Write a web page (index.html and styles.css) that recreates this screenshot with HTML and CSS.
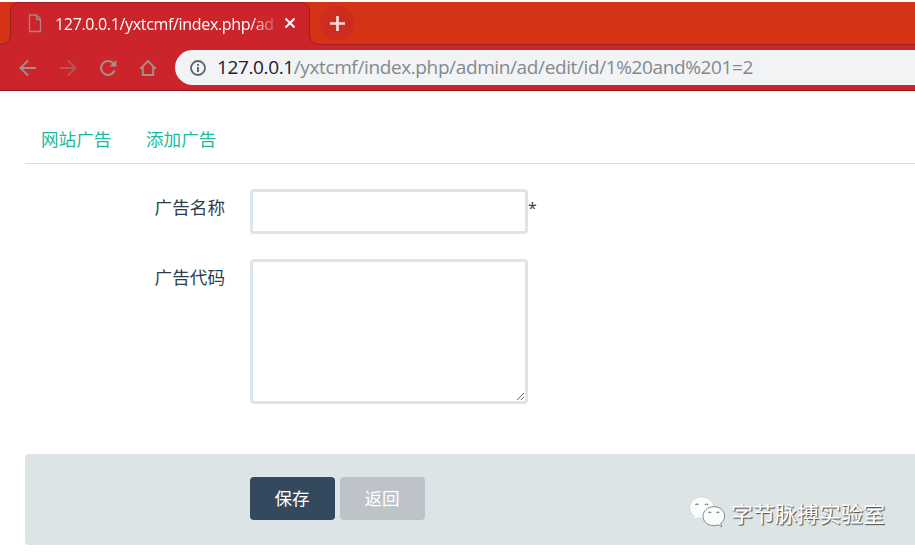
FILE: index.html
```html
<!DOCTYPE html>
<html lang="zh-CN">
<head>
<meta charset="utf-8">
<title>127.0.0.1/yxtcmf/index.php/admin/ad/edit</title>
<link rel="stylesheet" href="styles.css">
</head>
<body>
<header class="browser">
  <div class="tab-strip">
    <svg class="tab-shape" width="330" height="43" viewBox="0 0 330 43">
      <path d="M0 43V42Q10.500 42 10.500 32V9Q10.500 .5 19 .5H301Q309.500 .5 309.500 9V32Q309.500 42 320 42H330V43Z" fill="#cb242a"/>
      <path d="M0 42.500Q10.500 42.500 10.500 32V9Q10.500 .5 19 .5H301Q309.500 .5 309.500 9V32Q309.500 42.500 320 42.500H330" fill="none" stroke="#99211f"/>
    </svg>
    <div class="tab">
      <svg class="page-icon" width="14" height="19" viewBox="0 0 14 19"><path d="M1.500 1H8.500L12.500 5V17.500H1.500ZM8.500 1V5.500H12.500" fill="none" stroke="#a98480" stroke-width="1.300"/></svg>
      <span class="tab-title">127.0.0.1/yxtcmf/index.php/ad</span>
      <svg class="close" width="12" height="12" viewBox="0 0 12 12"><path d="M1.500 1.500L10.500 10.500M10.500 1.500L1.500 10.500" stroke="#fff" stroke-width="2"/></svg>
    </div>
    <div class="new-tab"><svg width="15" height="15" viewBox="0 0 15 15"><path d="M7.500 0V15M0 7.500H15" stroke="#f6dfda" stroke-width="2.600"/></svg></div>
  </div>
  <div class="toolbar">
    <svg class="nav" width="18" height="18" viewBox="0 0 18 18"><path d="M17 9H2M9 1.500L1.500 9L9 16.500" fill="none" stroke="#a3908c" stroke-width="1.800"/></svg>
    <svg class="nav" width="18" height="18" viewBox="0 0 18 18"><path d="M1 9H16M9 1.500L16.500 9L9 16.500" fill="none" stroke="#b5575a" stroke-width="1.800"/></svg>
    <svg class="nav" width="18" height="18" viewBox="0 0 18 18"><path d="M14.500 4.500A7 7 0 1 0 15.600 11.400" fill="none" stroke="#a3908c" stroke-width="2"/><path d="M17.300 1V7.500H10.500Z" fill="#a3908c"/></svg>
    <svg class="nav" width="18" height="18" viewBox="0 0 18 18"><path d="M1.200 9.800L9 2L16.800 9.800M3.800 8V16H14.200V8" fill="none" stroke="#a3908c" stroke-width="1.900"/></svg>
    <div class="address">
      <svg width="16" height="16" viewBox="0 0 16 16"><circle cx="8" cy="8" r="7" fill="none" stroke="#5f6368" stroke-width="1.800"/><path d="M8 7V12M8 4V5.800" stroke="#5f6368" stroke-width="1.900"/></svg>
      <span class="url"><b>127.0.0.1</b>/yxtcmf/index.php/admin/ad/edit/id/1%20and%201=2</span>
    </div>
  </div>
</header>
<main>
  <nav class="tabs"><a>网站广告</a><a>添加广告</a></nav>
  <form>
    <div class="row"><label for="name">广告名称</label><input id="name" type="text"><span class="required">*</span></div>
    <div class="row"><label for="code">广告代码</label><textarea id="code"></textarea></div>
    <div class="actions">
      <button type="button" class="save">保存</button>
      <button type="button" class="back">返回</button>
      <div class="brand">
        <svg width="37" height="33" viewBox="0 0 37 33">
          <path d="M12.500 1C5.500 1 .8 5.700 .8 11.500c0 4 1.800 6.800 4.800 9L4 24.300l5-2.500c8 2 16-2 16-10C25 5.500 19.500 1 12.500 1Z" fill="#fbfdfd" stroke="#c4cccc" stroke-width=".6"/>
          <path d="M25 10.700c-6.500 0-11 4.300-11 9.600s4.700 9.300 10.500 9.300c1.800 0 3.400-.3 4.800-.9l3.400 2.200-1-3.500c2.500-1.700 3.900-4.200 3.900-7.200 0-5.500-4.800-9.500-10.600-9.500Z" fill="#fbfdfd" stroke="#777d7d" stroke-width=".9"/>
          <path d="M6.500 9q1.500-2 3 0M16 9q1.500-2 3 0M19.500 17q1.300-2 2.600 0M27.500 17q1.300-2 2.600 0" fill="none" stroke="#737979" stroke-width="1.200"/>
        </svg>
        <span>字节脉搏实验室</span>
      </div>
    </div>
  </form>
</main>
</body>
</html>
```
FILE: styles.css
```css
* { box-sizing: border-box; }
body {
  margin: 0;
  height: 555px;
  overflow: hidden;
  background: #fff;
  color: #2c3e50;
  font-family: "Open Sans", "Noto Sans CJK SC", sans-serif;
}
svg { display: block; flex: none; }
.browser { padding-top: 2px; }
.tab-strip {
  position: relative;
  display: flex;
  align-items: center;
  height: 43px;
  background: #d43315;
  border-bottom: 1px solid #99211f;
}
.tab-shape { position: absolute; left: 0; top: 0; }
.tab {
  position: relative;
  display: flex;
  align-items: center;
  width: 310px;
  height: 42px;
  padding-left: 28px;
}
.tab-title {
  width: 222px;
  margin-left: 13px;
  white-space: nowrap;
  color: #fff;
  font-size: 16px;
  letter-spacing: -.33px;
  line-height: 24px;
  padding-top: 2px;
  mask-image: linear-gradient(to right, #000 88%, transparent 102%);
}
.close { margin-left: 7px; }
.new-tab {
  position: relative;
  display: flex;
  align-items: center;
  justify-content: center;
  width: 34px;
  height: 34px;
  margin-left: 10px;
  border-radius: 50%;
  background: #cf2c20;
}
.toolbar {
  display: flex;
  align-items: center;
  gap: 22px;
  height: 46px;
  padding-left: 19px;
  background: #cb242a;
  border-bottom: 1px solid #99151d;
}
.address {
  display: flex;
  align-items: center;
  flex: 1;
  height: 35px;
  margin-left: -4px;
  padding-left: 15px;
  border-radius: 18px 0 0 18px;
  background: #f1f3f4;
}
.url {
  margin-left: 11px;
  padding-bottom: 2px;
  white-space: nowrap;
  font-size: 19px;
  letter-spacing: -.38px;
  line-height: 26px;
  color: #85898d;
}
.url b { font-weight: 400; color: #202124; }
main { padding: 24px 0 0 25px; }
.tabs {
  display: flex;
  gap: 34.600px;
  height: 49px;
  padding-left: 16px;
  border-bottom: 1px solid #dcdfe0;
  color: #1abc9c;
  font-size: 17.6px;
  line-height: 48px;
}
form { padding-top: 25px; }
.row {
  display: flex;
  align-items: flex-start;
  margin-bottom: 25px;
}
label {
  width: 200px;
  margin-right: 25px;
  text-align: right;
  font-size: 17.6px;
  line-height: 37px;
}
input, textarea {
  width: 278px;
  height: 45px;
  margin: 0;
  border: 3px solid #dce4ec;
  border-radius: 4px;
  background: #fff;
}
textarea { height: 145px; resize: both; }
.required { font-size: 16px; line-height: 38px; }
.actions {
  display: flex;
  align-items: center;
  gap: 5px;
  height: 91px;
  margin-top: 50px;
  padding: 0 30px 3px 225px;
  border-radius: 4px 0 0 4px;
  background: #dce4e5;
}
button {
  width: 85px;
  height: 43px;
  padding: 0 1px 2px 0;
  border: 0;
  border-radius: 4px;
  color: #fff;
  font: 400 17.6px/41px "Noto Sans CJK SC", sans-serif;
}
.save { background: #34495e; }
.back { background: #bdc3c9; }
.brand {
  display: flex;
  align-items: center;
  gap: 5px;
  margin-left: auto;
  padding-top: 29px;
  color: #fff;
  font-size: 22px;
  line-height: 30px;
  text-shadow: 1px 1px 1px #444;
}
```
